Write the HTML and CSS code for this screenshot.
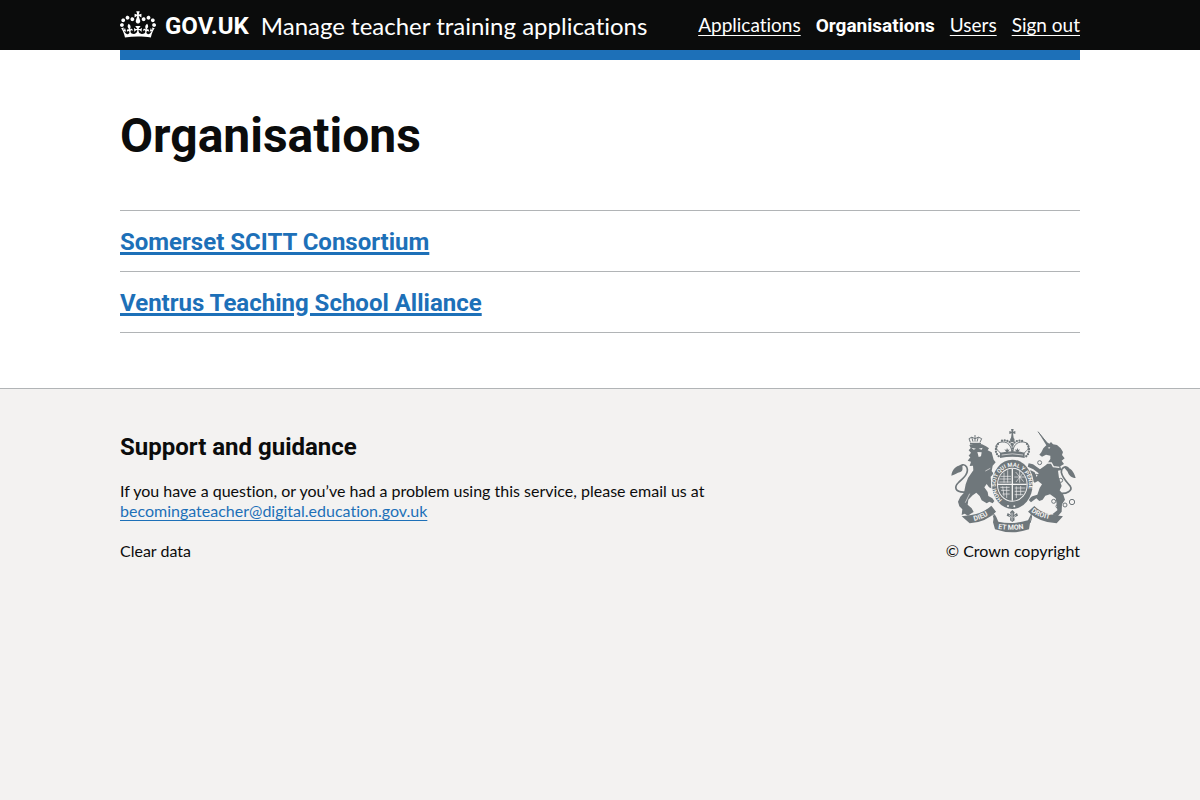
FILE: index.html
```html
<!DOCTYPE html>
<html lang="en">
<head>
<meta charset="utf-8">
<meta name="viewport" content="width=device-width, initial-scale=1">
<title>Organisations</title>
<link rel="stylesheet" href="styles.css">
</head>
<body>
<header class="header">
  <div class="container header-row">
    <div class="brand">
      <a class="logo" href="#">
        <svg class="crown" viewBox="0 0 132 97" aria-hidden="true"><path d="M25 30.2c3.5 1.5 7.7-.2 9.1-3.7 1.5-3.6-.2-7.8-3.9-9.2-3.6-1.4-7.6.3-9.1 3.9-1.4 3.5.3 7.5 3.9 9zM9 39.5c3.6 1.5 7.8-.2 9.2-3.7 1.5-3.6-.2-7.8-3.9-9.1-3.6-1.5-7.6.2-9.1 3.8-1.4 3.5.3 7.5 3.8 9zM4.4 57.2c3.5 1.5 7.7-.2 9.1-3.8 1.5-3.6-.2-7.7-3.9-9.1-3.5-1.5-7.6.3-9.1 3.8-1.4 3.5.3 7.6 3.9 9.1zm38.3-21.4c3.5 1.5 7.7-.2 9.1-3.8 1.5-3.6-.2-7.7-3.9-9.1-3.6-1.5-7.6.3-9.1 3.8-1.3 3.6.4 7.7 3.9 9.1zm64.4-5.6c-3.6 1.5-7.8-.2-9.1-3.7-1.5-3.6.2-7.8 3.8-9.2 3.6-1.4 7.7.3 9.2 3.9 1.3 3.5-.4 7.5-3.9 9zm15.9 9.3c-3.6 1.5-7.7-.2-9.1-3.7-1.5-3.6.2-7.8 3.7-9.1 3.6-1.5 7.7.2 9.2 3.8 1.5 3.5-.3 7.5-3.8 9zm4.7 17.7c-3.6 1.5-7.8-.2-9.2-3.8-1.5-3.6.2-7.7 3.9-9.1 3.6-1.5 7.7.3 9.2 3.8 1.3 3.5-.4 7.6-3.9 9.1zM89.3 35.8c-3.6 1.5-7.8-.2-9.2-3.8-1.4-3.6.2-7.7 3.9-9.1 3.6-1.5 7.7.3 9.2 3.8 1.4 3.6-.3 7.7-3.9 9.1zM69.7 17.7l8.9 4.7V9.3l-8.9 2.8c-.2-.3-.5-.6-.9-.9L72.4 0H59.6l3.5 11.2c-.3.3-.6.5-.9.9l-8.8-2.8v13.1l8.8-4.7c.3.3.6.7.9.9l-5 15.4v.1c-.2.8-.4 1.6-.4 2.4 0 4.1 3.1 7.5 7 8.1h.2c.3 0 .7.1 1 .1.4 0 .7 0 1-.1h.2c4-.6 7.1-4.1 7.1-8.1 0-.8-.1-1.7-.4-2.4V34l-5.1-15.4c.4-.2.7-.6 1-.9zM66 92.8c16.9 0 32.8 1.1 47.1 3.2 4-16.9 8.9-26.7 14-33.5l-9.6-3.4c1 4.9 1.1 7.2 0 10.2-1.5-1.4-3-4.3-4.2-8.7L108.6 76c2.8-2 5-3.2 7.5-3.3-4.4 9.4-10 11.9-13.6 11.2-4.3-.8-6.3-4.6-5.6-7.9 1-4.7 5.7-5.9 8-.5 4.3-8.7-3-11.4-7.6-8.8 7.1-7.2 7.9-13.5 2.1-21.1-8 6.1-8.1 12.3-4.5 20.8-4.7-5.4-12.1-2.5-9.5 6.2 3.4-5.2 7.9-2 7.2 3.1-.6 4.3-6.4 7.8-13.5 7.2-10.3-.9-10.9-8-11.2-13.8 2.5-.5 7.1 1.8 11 7.3L80.2 60c-4.1 4.4-8 5.3-12.3 5.4 1.4-4.4 8-11.6 8-11.6H55.5s6.4 7.2 7.9 11.6c-4.2-.1-8-1-12.3-5.4l1.4 16.4c3.9-5.5 8.5-7.7 10.9-7.3-.3 5.8-.9 12.8-11.1 13.8-7.2.6-12.9-2.9-13.5-7.2-.7-5 3.8-8.3 7.1-3.1 2.7-8.7-4.6-11.6-9.4-6.2 3.7-8.5 3.6-14.7-4.6-20.8-5.8 7.6-5 13.9 2.2 21.1-4.7-2.6-11.9.1-7.7 8.8 2.3-5.5 7.1-4.2 8.1.5.7 3.3-1.3 7.1-5.7 7.9-3.5.7-9-1.8-13.5-11.2 2.5.1 4.7 1.3 7.5 3.3l-4.7-15.4c-1.2 4.4-2.7 7.2-4.3 8.7-1.1-3-.9-5.3 0-10.2l-9.5 3.4c5 6.9 9.9 16.7 14 33.5 14.8-2.1 30.8-3.2 47.7-3.2z"/></svg>
        <span>GOV.UK</span>
      </a>
      <a class="service" href="#">Manage teacher training applications</a>
    </div>
    <nav class="nav" aria-label="Main">
      <a href="#">Applications</a>
      <a class="current" href="#" aria-current="page">Organisations</a>
      <a href="#">Users</a>
      <a href="#">Sign out</a>
    </nav>
  </div>
</header>
<div class="container"><div class="bar"></div></div>
<main class="container main">
  <h1>Organisations</h1>
  <ul class="list">
    <li><a href="#">Somerset SCITT Consortium</a></li>
    <li><a href="#">Ventrus Teaching School Alliance</a></li>
  </ul>
</main>
<footer class="footer">
  <div class="container footer-row">
    <div class="support">
      <h2>Support and guidance</h2>
      <p>If you have a question, or you’ve had a problem using this service, please email us at <a class="email" href="mailto:becomingateacher@digital.education.gov.uk">becomingateacher@digital.education.gov.uk</a></p>
      <a class="clear" href="#">Clear data</a>
    </div>
    <a class="copyright" href="#">
      <svg class="crest" viewBox="33 27 375 306" aria-hidden="true">
        <defs>
          <path id="garter" d="M190 239A50 55 0 1 1 250 239"/>
          <path id="dieu" d="M106 303Q137 296 163 274"/>
          <path id="mon" d="M177 326Q220 334 268 324"/>
          <path id="droit" d="M276 275Q307 297 350 300"/>
        </defs>
        <!-- lion -->
        <path d="M91 75L106 71 129 73 141 79 150 85 146 91 158 97 161 108 164 119 170 127 161 137 158 153 164 161 155 170 156 182 166 196 161 207 150 202 143 192 136 202 146 216 148 228 160 235 166 243 161 250 151 245 143 250 128 241 122 228 112 218 101 226 88 239 86 254 98 265 104 276 95 281 87 287 77 281 68 285 70 268 61 259 57 245 64 230 75 218 80 193 87 174 103 151 102 137 92 138 96 125 86 122 94 112 89 107 96 98 89 91 95 84z"/>
        <path d="M97 83l14 3-7 3zM119 86l12-3-3 6zM115 96l13 1-2 12-7 2z" class="cut"/>
        <path d="M92 221l-13 27M139 153l15-8" class="cut-line"/>
        <path d="M79 216C47 218 44 201 60 186C76 172 91 158 83 141C76 129 65 135 59 143" class="tail"/>
        <path d="M70 136C52 135 39 149 37 167C49 165 55 158 62 157C74 153 70 144 70 136z"/>
        <path d="M93 71h33" class="tail"/>
        <path d="M94 67L90 56M102 65L98 51M108 65V45M114 65l4-14M123 67l5-11M90 56q8-9 18 0 11-9 20 0" class="grey-line"/>
        <!-- unicorn -->
        <path d="M296 34L322 65 331 71 336 66 342 73 354 75 365 85 372 96 369 105 377 115 368 122 375 132 364 139 367 150 357 152 360 174 368 198 362 211 373 224 378 239 369 253 368 275 355 290 340 283 355 271 353 252 350 235 333 223 319 227 311 239 301 243 292 235 276 247 267 238 280 229 295 224 302 204 309 193 297 183 287 188 274 177 277 165 267 157 275 151 287 157 293 171 299 160 283 148 266 140 269 130 282 133 303 148 322 134 334 117 334 107 321 104 309 110 301 104 307 97 313 85 322 76z"/>
        <path d="M297 35L322 66" class="grey-line"/>
        <path d="M326 83l8-2-3 5z" class="cut"/>
        <path d="M305 125l12-9 6 13 14 0 6 11 18 2" class="cut-line wide"/>
        <path d="M365 220C382 222 402 212 394 199C388 190 371 176 367 157C366 143 379 136 388 145" class="tail"/>
        <path d="M374 141C394 139 405 155 410 174C398 174 389 165 386 155z"/>
        <g class="ring"><circle cx="302" cy="128" r="6"/><circle cx="293" cy="169" r="6"/><circle cx="365" cy="181" r="6"/><circle cx="344" cy="244" r="6"/><circle cx="357" cy="259" r="6"/><circle cx="378" cy="255" r="6"/><circle cx="399" cy="246" r="8"/></g>
        <!-- garter and shield -->
        <ellipse cx="220" cy="193" rx="64" ry="76" class="cut"/>
        <ellipse cx="220" cy="193" rx="61" ry="74"/>
        <ellipse cx="220" cy="194" rx="46" ry="51" class="cut"/>
        <ellipse cx="220" cy="194" rx="43" ry="48"/>
        <path d="M220 146v96M177 193h86" class="cut-line wide"/>
        <path d="M184 169h32M181 177h35M181 186h35M195 158v30M206 151v37M230 156l24 29M253 158l-22 28M242 152v36M226 171h34M184 202h28M186 211h26M190 222h22M191 199l4 30M203 199v35M227 204h32M227 214h30M227 224h26M232 199v35M245 198v28" class="cut-line"/>
        <text class="motto garter-text"><textPath href="#garter">HONI SOIT QUI MAL Y PENSE</textPath></text>
        <circle cx="207" cy="258" r="3" class="cut"/><circle cx="226" cy="259" r="3" class="cut"/>
        <!-- royal crown -->
        <path d="M187 101C163 84 169 67 190 66C207 65 217 76 219 99M221 99C222 76 234 65 251 66C272 67 277 84 253 101" class="ring"/>
        <path d="M183 98Q220 89 257 98V114Q220 106 183 114z"/>
        <path d="M177 72C164 91 173 106 184 112M189 62C206 58 217 68 220 76C224 65 239 58 253 64M264 72C277 91 267 107 257 112M220 77V98" class="dots"/>
        <path d="M188 105Q220 98 252 105" class="cut-line"/>
        <path d="M202 96l-6-8 6 2 2-6 3 6 5-2-5 8zM233 96l-6-8 6 2 2-6 3 6 5-2-5 8z"/>
        <path d="M216 27h8l-2 8 7-2v9l-7-2 2 14h-8l2-14-7 2v-9l7 2z"/><circle cx="220" cy="60" r="7"/>
        <!-- motto ribbons -->
        <path d="M68 289L97 285Q132 280 157 257L171 275Q142 306 92 310z"/>
        <path d="M372 289L346 285Q309 281 286 258L267 275Q303 308 353 310z"/>
        <path d="M166 281Q173 290 178 305Q220 315 267 301L278 279L270 328Q220 346 168 328L162 307z"/>
        <path d="M169 275Q158 277 165 294L173 311M270 274Q284 281 273 309" class="ribbon"/>
        <path d="M220 270l7 7-3 8 10-6 3 8-11 5 1 9-7 5-7-5 1-9-11-5 3-8 10 6-3-8z"/>
        <path d="M219 278v24M210 285l7 8M230 285l-7 8" class="cut-line"/>
        <text class="motto"><textPath href="#dieu">DIEU</textPath></text>
        <text class="motto"><textPath href="#mon">ET MON</textPath></text>
        <text class="motto"><textPath href="#droit">DROIT</textPath></text>
      </svg>
      <span>© Crown copyright</span>
    </a>
  </div>
</footer>
</body>
</html>
```
FILE: styles.css
```css
* { box-sizing: border-box; }
html { background: #f3f2f1; }
body {
  margin: 0;
  background: #fff;
  color: #0b0c0c;
  font-family: Lato, "Liberation Sans", sans-serif;
  font-size: 16px;
  line-height: 20px;
  font-variant-ligatures: none;
}
h1, h2, .logo, .list, .nav .current, .motto { font-family: Roboto, "Liberation Sans", sans-serif; font-weight: 700; }
a { color: inherit; text-underline-offset: 3px; }
.container { max-width: 960px; margin: 0 auto; }
.header { background: #0b0c0c; color: #fff; }
.header-row {
  display: flex;
  justify-content: space-between;
  align-items: center;
  min-height: 50px;
}
.brand { display: flex; align-items: center; gap: 12px; padding-top: 2px; font-size: 24px; line-height: 30px; }
.brand a { text-decoration: none; }
.logo { display: flex; align-items: center; gap: 9px; }
.crown { width: 36px; height: 27px; margin-bottom: 4px; fill: currentColor; }
.nav { display: flex; align-items: baseline; gap: 15px; font-size: 19px; line-height: 25px; }
.nav .current { text-decoration: none; }
.bar { height: 10px; background: #1d70b8; }
.main { padding: 51px 0 55px; }
h1 { margin: 0 0 49px; font-size: 48px; line-height: 50px; }
.list {
  margin: 0;
  padding: 0;
  list-style: none;
  border-top: 1px solid #b1b4b6;
  font-size: 24px;
  line-height: 30px;
}
.list li { padding: 16px 0 14px; border-bottom: 1px solid #b1b4b6; }
.list a { color: #1d70b8; text-decoration-thickness: 3px; text-underline-offset: 2px; }
.footer { background: #f3f2f1; border-top: 1px solid #b1b4b6; padding: 40px 0; }
.footer-row { display: flex; justify-content: space-between; align-items: flex-start; gap: 30px; }
.support { flex: 0 1 600px; padding-top: 3px; }
h2 { margin: 0 0 19px; font-size: 24px; line-height: 30px; }
p { margin: 0 0 20px; }
.email { display: inline-block; color: #1d70b8; text-decoration-thickness: 1px; }
.clear { text-decoration: none; }
.copyright { display: flex; flex-direction: column; align-items: center; gap: 10px; text-decoration: none; white-space: nowrap; }
.crest { width: 125px; height: 102px; fill: #6f777b; overflow: visible; }
.crest .cut { fill: #f3f2f1; }
.cut-line, .grey-line, .tail, .ring, .dots, .ribbon { fill: none; stroke: #6f777b; stroke-width: 3px; }
.cut-line { stroke: #f3f2f1; stroke-width: 2px; }
.wide { stroke-width: 4px; }
.tail { stroke-width: 5px; }
.dots { stroke-width: 7px; stroke-dasharray: 0 8; stroke-linecap: round; }
.motto { fill: #f3f2f1; font-size: 21px; }
.garter-text { font-size: 17px; }
```
